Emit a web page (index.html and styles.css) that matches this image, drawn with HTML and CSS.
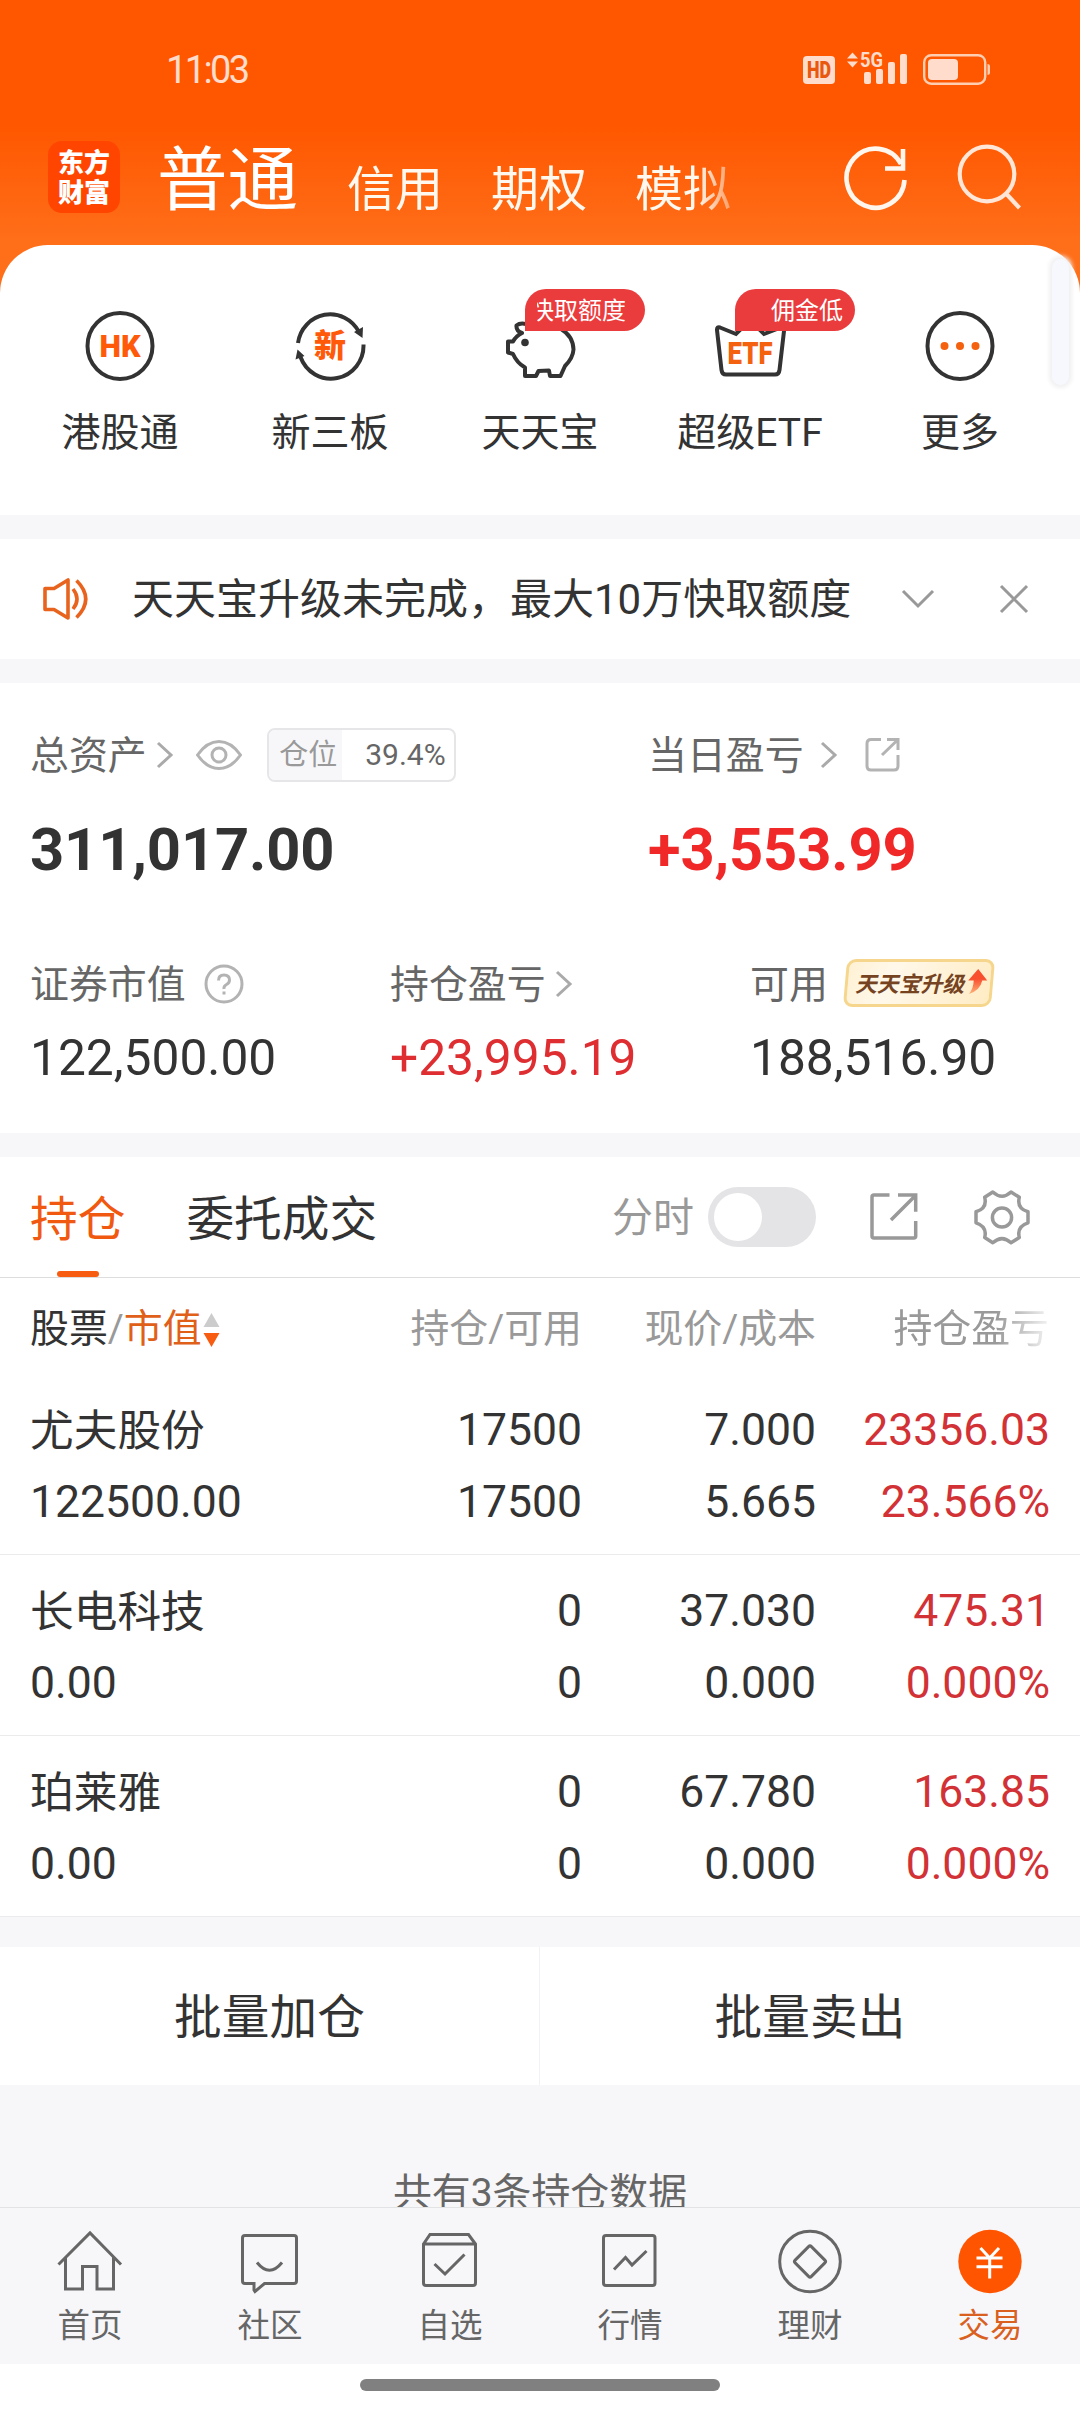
FILE: index.html
```html
<!DOCTYPE html>
<html lang="zh-CN">
<head>
<meta charset="utf-8">
<title>东方财富 - 交易</title>
<link rel="stylesheet" href="styles.css">
</head>
<body>
<div class="app">
  <header class="top">
    <div class="status">
      <span class="clock">11:03</span>
      <svg class="status-icons" width="190" height="36" viewBox="0 0 190 36">
        <rect x="3" y="6" width="32" height="28" rx="4" fill="#ffdccb"/>
        <text x="19" y="28" text-anchor="middle" font-size="23" font-weight="900" textLength="24" lengthAdjust="spacingAndGlyphs" fill="#e8590f">HD</text>
        <path d="M47 8.500l5.500-6 5.500 6zM47 11.500h11l-5.500 6z" fill="#ffdccb"/>
        <text x="60" y="17" font-size="20" font-weight="700" textLength="23" lengthAdjust="spacingAndGlyphs" fill="#ffdccb">5G</text>
        <g fill="#ffdccb"><rect x="64" y="22" width="7" height="12" rx="2"/><rect x="76" y="19" width="7" height="15" rx="2"/><rect x="88" y="12" width="7" height="22" rx="2"/><rect x="100" y="4" width="7" height="30" rx="2"/></g>
        <rect x="124.200" y="5.200" width="61" height="28.500" rx="7" fill="none" stroke="#ffcdb0" stroke-width="2.400"/>
        <rect x="128" y="9" width="30" height="21" rx="4" fill="#ffdccb"/>
        <path d="M187.500 14q2.500 0 2.500 2v7q0 2-2.500 2z" fill="#ffcdb0"/>
      </svg>
    </div>
    <div class="accounts">
      <div class="logo"><span>东方</span><span>财富</span></div>
      <nav class="account-tabs">
        <span class="active">普通</span><span>信用</span><span>期权</span><span>模拟</span>
      </nav>
      <svg class="refresh" width="68" height="68" viewBox="0 0 68 68" fill="none" stroke="#fff6ee" stroke-width="4.600">
        <path d="M62.500 37A29 29.500 0 1 1 59 21"/><path d="M61 6v19.500H43"/>
      </svg>
      <svg class="search" width="68" height="68" viewBox="0 0 68 68" fill="none" stroke="#ffe6d6" stroke-width="4.200">
        <circle cx="31" cy="32" r="27.300"/><path d="M50 51.500L63.500 66"/>
      </svg>
    </div>
  </header>

  <section class="shortcuts">
    <div class="shortcut">
      <svg width="72" height="72" viewBox="0 0 72 72"><ellipse cx="36" cy="36" rx="32.500" ry="33" fill="none" stroke="#333" stroke-width="4"/><text x="36" y="47" text-anchor="middle" font-size="31" font-weight="900" textLength="41" lengthAdjust="spacingAndGlyphs" fill="#ff5a0a">HK</text></svg>
      <span>港股通</span>
    </div>
    <div class="shortcut">
      <svg width="72" height="72" viewBox="0 0 72 72"><g fill="none" stroke="#333" stroke-width="4"><path d="M4 33A32.500 33 0 0 1 65 22"/><path d="M69.500 34.500A32.500 33 0 0 1 6.500 47"/></g><path d="M60 22l9-5-.5 11zM3.500 39.500L1.500 49.500l9-3.500z" fill="#333"/><text x="36" y="47" text-anchor="middle" font-size="32" font-weight="900" fill="#ff5a0a">新</text></svg>
      <span>新三板</span>
    </div>
    <div class="shortcut">
      <svg width="72" height="72" viewBox="0 0 72 72"><path d="M22 14Q16 12.500 12.500 15.500Q12 21 18 23Q12 26 9 31.500H4V42.500L9 44Q13 53 21 57.500V66H32L34.500 61L45 60.500L46 66H56.500L61 56Q69 48 69.500 39.500Q69 26 57 19L40 15Z" fill="none" stroke="#333" stroke-width="4" stroke-linejoin="round"/><circle cx="21" cy="32.500" r="3.800" fill="#333"/></svg>
      <em class="tag"><b>快取额度</b></em>
      <span>天天宝</span>
    </div>
    <div class="shortcut">
      <svg width="72" height="72" viewBox="0 0 72 72"><path d="M6 17.500L22 24L36 10L50 24L67 17.500Q70.500 17 70 21L65.500 60Q65 64.500 61 64.500H12Q8 64.500 7.500 60L3 20Q2.800 16.500 6 17.500Z" fill="none" stroke="#333" stroke-width="4"/><text x="36" y="53.500" text-anchor="middle" font-size="32" font-weight="900" textLength="45" lengthAdjust="spacingAndGlyphs" fill="#f4610f">ETF</text></svg>
      <em class="tag tag-fee"><b>佣金低</b></em>
      <span>超级ETF</span>
    </div>
    <div class="shortcut">
      <svg width="72" height="72" viewBox="0 0 72 72"><ellipse cx="36" cy="36" rx="32.500" ry="33" fill="none" stroke="#333" stroke-width="4"/><g fill="#f4610f"><circle cx="20.500" cy="36" r="4"/><circle cx="36" cy="36" r="4"/><circle cx="51.500" cy="36" r="4"/></g></svg>
      <span>更多</span>
    </div>
    <i class="scroll-thumb"></i>
  </section>

  <section class="notice">
    <svg width="52" height="48" viewBox="0 0 52 48" fill="none" stroke="#e8641e" stroke-width="3.600"><path d="M5 13.500H14L28 5V43L14 34.500H5Z" stroke-linejoin="round"/><path d="M33 14Q41 24 33 34"/><path d="M36.500 5.500Q55 24 36.500 42.500"/></svg>
    <p>天天宝升级未完成，最大10万快取额度</p>
    <svg class="fold" width="34" height="22" viewBox="0 0 34 22" fill="none" stroke="#999" stroke-width="3"><path d="M2 3L17 18L32 3"/></svg>
    <svg class="close" width="30" height="30" viewBox="0 0 30 30" fill="none" stroke="#999" stroke-width="3"><path d="M2 2L28 28M28 2L2 28"/></svg>
  </section>

  <section class="assets">
    <div class="totals">
      <div class="total">
        <div class="label">
          <span>总资产</span>
          <svg class="more" width="18" height="28" viewBox="0 0 18 28"><path d="M2 2L15 14L2 26"/></svg>
          <svg class="eye" width="46" height="32" viewBox="0 0 46 32"><path d="M1.500 16Q11 2.500 23 2.500T44.500 16Q35 29.500 23 29.500T1.500 16Z"/><circle cx="23" cy="16" r="7"/></svg>
          <span class="position"><b>仓位</b><i>39.4%</i></span>
        </div>
        <strong>311,017.00</strong>
      </div>
      <div class="total">
        <div class="label">
          <span>当日盈亏</span>
          <svg class="more far" width="18" height="28" viewBox="0 0 18 28"><path d="M2 2L15 14L2 26"/></svg>
          <svg class="share" width="38" height="38" viewBox="0 0 38 38"><path d="M17 3.500H7Q3 3.500 3 7.500V30Q3 34 7 34H30Q34 34 34 30V19M23 3.500H34V14M33 4.500L18 19"/></svg>
        </div>
        <strong class="up">+3,553.99</strong>
      </div>
    </div>
    <div class="details">
      <div>
        <div class="label"><span>证券市值</span><svg class="help" width="40" height="40" viewBox="0 0 40 40"><circle cx="20" cy="20" r="18"/><path d="M14.500 16.500Q14.500 11 20 11T25.500 16Q25.500 19 22.500 20.500T20 25M20 27.500V30.500"/></svg></div>
        <p>122,500.00</p>
      </div>
      <div>
        <div class="label"><span>持仓盈亏</span><svg class="more" width="18" height="28" viewBox="0 0 18 28"><path d="M2 2L15 14L2 26"/></svg></div>
        <p class="up">+23,995.19</p>
      </div>
      <div>
        <div class="label"><span>可用</span><span class="upgrade"><b>天天宝升级</b><svg width="20" height="28" viewBox="0 0 20 28"><defs><linearGradient id="rise" x1="0" y1="0" x2="0" y2="1"><stop offset="0.400" stop-color="#f8502f"/><stop offset="1" stop-color="#ffb37a"/></linearGradient></defs><path d="M10 1L20 12.500H15Q14 22 3 26Q7 20 6.500 12.500H1Z" fill="url(#rise)"/></svg></span></div>
        <p>188,516.90</p>
      </div>
    </div>
  </section>

  <section class="holdings">
    <div class="tabs">
      <span class="tab active">持仓</span>
      <span class="tab">委托成交</span>
      <span class="chart-label">分时</span>
      <span class="switch"></span>
      <svg class="export" width="52" height="60" viewBox="0 0 52 60"><path d="M21.500 7H6Q4 7 4 9V48Q4 50 6 50H45.700Q47.700 50 47.700 48V33M30 7H47.700V23.700M47 8L23 32"/></svg>
      <svg class="gear" width="60" height="60" viewBox="0 0 60 60"><path d="M20.800 4Q30 12.500 39 4L47.300 9.300Q44.500 20.500 56 23.700V34.800Q44.500 38.500 47.300 49.500L39 54.800Q30 46.500 20.800 54.800L12.700 49.500Q15.500 38.500 4 34.800V23.700Q15.500 20.500 12.700 9.300Z" stroke-linejoin="round"/><circle cx="30" cy="29.500" r="9.600"/></svg>
    </div>
    <div class="grid head">
      <span class="name">股票<i>/</i><b>市值</b><svg width="17" height="36" viewBox="0 0 17 36"><path d="M.5 15L8.500 1L16.500 15Z" fill="#ccc"/><path d="M.5 21L8.500 35L16.500 21Z" fill="#f75c10"/></svg></span>
      <span>持仓/可用</span><span>现价/成本</span><span class="fade">持仓盈亏</span>
    </div>
    <div class="grid row">
      <span>尤夫股份</span><span>17500</span><span>7.000</span><span class="gain">23356.03</span>
      <span>122500.00</span><span>17500</span><span>5.665</span><span class="gain">23.566%</span>
    </div>
    <div class="grid row">
      <span>长电科技</span><span>0</span><span>37.030</span><span class="gain">475.31</span>
      <span>0.00</span><span>0</span><span>0.000</span><span class="gain">0.000%</span>
    </div>
    <div class="grid row">
      <span>珀莱雅</span><span>0</span><span>67.780</span><span class="gain">163.85</span>
      <span>0.00</span><span>0</span><span>0.000</span><span class="gain">0.000%</span>
    </div>
  </section>

  <section class="batch"><span>批量加仓</span><span>批量卖出</span></section>
  <div class="summary">共有3条持仓数据</div>

  <nav class="bottom-nav">
    <div><svg width="72" height="72" viewBox="0 0 72 72"><path d="M4.500 38.500L36 7L67 38.500M11.500 31V63H28.500V40.500H43V63H59.500V31"/></svg><span>首页</span></div>
    <div><svg width="72" height="72" viewBox="0 0 72 72"><path d="M11 9.500H60Q62.500 9.500 62.500 12V55Q62.500 57.500 60 57.500H30.500L21 65.500L20 64V57.500H11Q8.500 57.500 8.500 55V12Q8.500 9.500 11 9.500ZM23 36.500Q35.500 52 48 36.500"/></svg><span>社区</span></div>
    <div><svg width="72" height="72" viewBox="0 0 72 72"><path d="M9.500 18L16 8.500H54.500L61.500 18V57Q61.500 59.500 59 59.500H12Q9.500 59.500 9.500 57ZM9.500 18H61.500M20.500 38L31 48L50.500 28.500"/></svg><span>自选</span></div>
    <div><svg width="72" height="72" viewBox="0 0 72 72"><rect x="9.500" y="9.500" width="51.500" height="50" rx="2.500"/><path d="M20 43.500L31.500 31.500L38 39L52.500 25"/></svg><span>行情</span></div>
    <div><svg width="72" height="72" viewBox="0 0 72 72"><circle cx="36" cy="35.500" r="30.300"/><rect x="24.500" y="24" width="23" height="23" rx="2" transform="rotate(45 36 35.500)"/></svg><span>理财</span></div>
    <div class="active"><svg width="72" height="72" viewBox="0 0 72 72"><circle class="coin" cx="36" cy="35.500" r="31.700"/><path d="M26.500 22L35.700 32L45 22M35.700 32V52.500M22.500 32H48.500M22.500 40.700H48.500"/></svg><span>交易</span></div>
  </nav>
  <footer class="gesture"><i></i></footer>
</div>
</body>
</html>
```
FILE: styles.css
```css
* { box-sizing: border-box; margin: 0; padding: 0; }
body { background: #f7f7fa; }
i, em { font-style: normal; }
b { font-weight: inherit; }
svg { display: block; flex: none; }
.app {
  width: 1080px; height: 2412px; overflow: hidden;
  display: flex; flex-direction: column;
  font-family: Roboto, "Noto Sans CJK SC", sans-serif;
  color: #333; white-space: nowrap;
  background: linear-gradient(#ff5700 0, #ff5700 125px, #ff6f1a 245px, #ff6f1a 300px, #f7f7fa 300px);
}
.app > * { flex: none; }

/* header */
.top { height: 245px; }
.status { height: 120px; padding: 50px 90px 0 166px; display: flex; justify-content: space-between; align-items: flex-start; }
.clock { font-size: 38px; line-height: 40px; letter-spacing: -2.6px; color: #ffdccb; }
.accounts { display: flex; align-items: flex-start; padding-left: 48px; }
.logo {
  width: 72px; height: 72px; margin-top: 21px; padding-top: 1px; border-radius: 14px; background: #ff4500;
  display: flex; flex-direction: column; align-items: center; justify-content: center;
  color: #fff; font-size: 26px; line-height: 30px; font-weight: 900;
}
.account-tabs {
  display: flex; align-items: baseline; gap: 48px; margin-left: 37px; width: 620px; height: 122px;
  font-size: 48px; line-height: 122px; color: #fff8ee;
  -webkit-mask-image: linear-gradient(90deg, #000 540px, transparent 595px);
  mask-image: linear-gradient(90deg, #000 540px, transparent 595px);
}
.account-tabs span + span { position: relative; top: 1px; }
.account-tabs .active { font-size: 70.500px; margin-right: 1px; color: #fff; }
.refresh { margin: 23px 0 0 65px; }
.search { margin: 22px 0 0 46px; }

/* shortcuts */
.shortcuts { position: relative; height: 270px; padding: 65px 15px 0; display: flex; background: #fff; border-radius: 48px 48px 0 0; }
.shortcut { position: relative; width: 210px; display: flex; flex-direction: column; align-items: center; gap: 22px; }
.shortcut > span { font-size: 39px; line-height: 58px; }
.tag {
  position: absolute; left: 90px; top: -21px; width: 120px; height: 42px; padding-right: 19px;
  border-radius: 21px 21px 21px 0; background: #ea3b3d; color: #fff; font-size: 24px; line-height: 44px;
  display: flex; justify-content: flex-end;
}
.tag b { width: 89px; overflow: hidden; display: flex; justify-content: flex-end; }
.tag-fee { padding-right: 12px; }
.scroll-thumb { position: absolute; right: 11px; top: 14px; width: 17px; height: 126px; border-radius: 10px; background: #f7f8fe; box-shadow: 0 0 4px 3px #f1f1f2; }

.notice { height: 120px; margin: 24px 0; padding: 0 51px 0 40px; background: #fff; display: flex; align-items: center; }
.notice p { font-size: 42px; line-height: 60px; margin: 1px 0 0 40px; }
.fold { margin-left: auto; }
.close { margin-left: 64px; }

/* assets */
.assets { height: 450px; background: #fff; padding-left: 30px; }
.totals { display: flex; height: 257px; padding-top: 42px; }
.total { width: 618px; }
.total + .total { width: auto; }
.label { display: flex; align-items: center; height: 60px; font-size: 38.900px; color: #666; }
.label > span:first-child { line-height: 58px; margin-top: 2px; }
.label svg { fill: none; stroke: #b3b3b3; stroke-width: 3; }
.label .more { margin-left: 9px; stroke: #aaa; }
.label .far { margin-left: 16px; }
.label .eye { margin-left: 22px; }
.label .share { margin-left: 26px; }
.label .help { margin-left: 18px; }
.position { display: flex; margin-left: 25px; width: 189px; height: 54px; border: 2px solid #e6e6e9; border-radius: 8px; font-size: 29px; line-height: 50px; overflow: hidden; }
.position b { width: 73px; text-align: center; background: #f7f7fa; color: #999; padding-left: 6px; }
.position i { flex: 1; text-align: right; padding-right: 8px; font-size: 30px; }
strong { display: block; font-size: 59.700px; font-weight: 700; line-height: 70px; margin-top: 30px; letter-spacing: -.15px; }
.up { color: #f02828; }
.details { display: flex; padding-top: 14px; }
.details > div { flex: none; width: 360px; }
.details p { font-size: 49.700px; line-height: 60px; margin-top: 14px; }
.details .up { color: #df2e31; }
.upgrade {
  margin: -2px 0 0 17px; width: 148px; height: 48px; padding-left: 7px; border: 3px solid #f5d68c; border-radius: 9px;
  background: linear-gradient(110deg, #fff1d4, #fff8ea 30%, #ffecc4); transform: skewX(-5deg);
  display: flex; align-items: center; color: #75431f; font-size: 21.800px; font-weight: 700; font-style: italic;
}
.upgrade b { margin-top: -1px; transform: skewX(5deg); }
.label .upgrade svg { stroke: none; margin: -2px 0 0 3px; }

/* holdings */
.holdings { margin-top: 24px; background: #fff; }
.tabs { height: 121px; border-bottom: 1px solid #ddd; padding-left: 30px; display: flex; align-items: center; font-size: 47.700px; }
.tab { line-height: 127px; height: 120px; }
.tab + .tab { margin-left: 61px; }
.tab.active { color: #f0590f; display: flex; flex-direction: column; align-items: center; }
.tab.active::after { content: ""; width: 42px; height: 6px; border-radius: 3px; background: #f75c10; margin: -13px 0 0 1px; }
.chart-label { margin-left: auto; font-size: 41px; color: #999; line-height: 60px; margin-top: 2px; }
.switch { margin-left: 14px; width: 108px; height: 60px; border-radius: 30px; background: #e4e4e6; padding: 6px; }
.switch::after { content: ""; display: block; width: 48px; height: 48px; border-radius: 50%; background: #fff; }
.tabs svg { fill: none; stroke: #999; stroke-width: 3.500; }
.export { margin: 1px 0 0 52px; }
.gear { margin: 1px 48px 0 52px; }
.grid { display: grid; grid-template-columns: 252px 300px 234px 234px; padding: 0 30px; text-align: right; }
.head { height: 96px; line-height: 101px; font-size: 38.900px; color: #999; }
.name { display: flex; align-items: center; color: #333; }
.name i { color: #999; }
.name b { color: #e0601a; }
.name svg { margin: 3px 0 0 1px; }
.fade { padding-right: 1px; -webkit-mask-image: linear-gradient(90deg, #000 180px, transparent 240px); mask-image: linear-gradient(90deg, #000 180px, transparent 240px); }
.row { height: 181px; padding-top: 20px; grid-auto-rows: 72px; line-height: 73px; font-size: 44.500px; border-bottom: 1px solid #ebebed; }
.row span:nth-child(4n + 1) { text-align: left; }
.row span:first-child { font-size: 43.700px; line-height: 75px; }
.gain { color: #d23236; }

.batch { height: 138px; margin-top: 30px; display: flex; background: #fff; font-size: 47.700px; line-height: 143px; text-align: center; }
.batch span { flex: none; width: 539px; }
.batch span + span { width: 541px; border-left: 1px solid #f2f2f4; }
.summary { height: 122px; padding-top: 79px; overflow: hidden; text-align: center; font-size: 38.900px; line-height: 58px; color: #666; }

/* bottom navigation */
.bottom-nav { height: 157px; border-top: 1px solid #e1e3e5; background: #f7f7fa; display: flex; padding-top: 18px; }
.bottom-nav div { flex: 1; display: flex; flex-direction: column; align-items: center; font-size: 32.500px; line-height: 48px; color: #666; gap: 4px; }
.bottom-nav svg { fill: none; stroke: #666; stroke-width: 3; }
.bottom-nav .active { color: #d9601e; }
.bottom-nav .active svg { stroke: #fff; }
.bottom-nav .coin { fill: #ff5500; stroke: none; }
.gesture { height: 48px; background: #fff; display: flex; justify-content: center; padding-top: 15px; }
.gesture i { width: 360px; height: 12px; border-radius: 6px; background: #808080; }
```
